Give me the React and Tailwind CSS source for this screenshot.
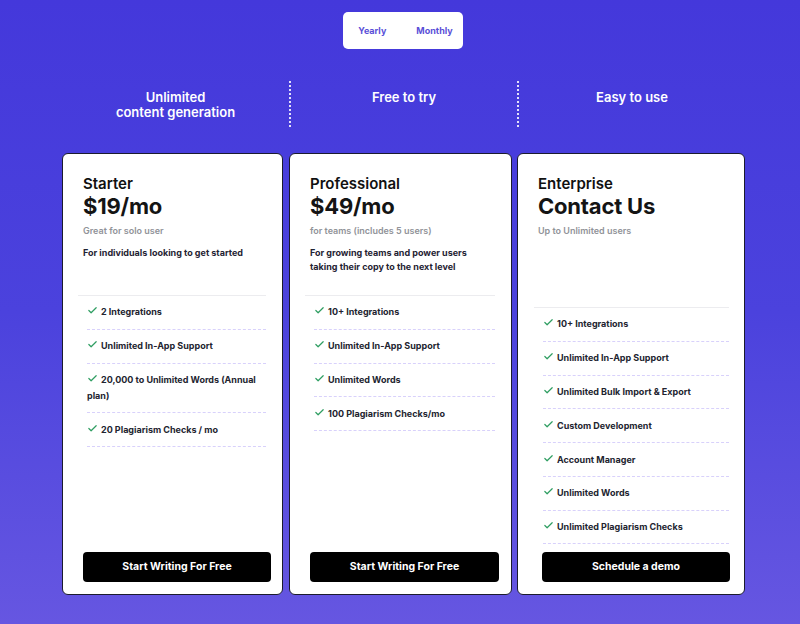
import React from "react";

const plans = [
  {
    name: "Starter",
    price: "$19/mo",
    note: "Great for solo user",
    description: "For individuals looking to get started",
    features: [
      "2 Integrations",
      "Unlimited In-App Support",
      "20,000 to Unlimited Words (Annual plan)",
      "20 Plagiarism Checks / mo",
    ],
    cta: "Start Writing For Free",
    card: "w-[221px]",
    top: "h-[141px] px-[20px]",
    desc: "pr-0",
    rule: "ml-[15px] mr-[16px]",
    list: "ml-[24px] mr-[16px]",
    button: "ml-[20px] mr-[11px]",
  },
  {
    name: "Professional",
    price: "$49/mo",
    note: "for teams (includes 5 users)",
    description: "For growing teams and power users taking their copy to the next level",
    features: [
      "10+ Integrations",
      "Unlimited In-App Support",
      "Unlimited Words",
      "100 Plagiarism Checks/mo",
    ],
    cta: "Start Writing For Free",
    card: "w-[223px]",
    top: "h-[141px] px-[20px]",
    desc: "pr-[20px]",
    rule: "ml-[15px] mr-[16px]",
    list: "ml-[24px] mr-[16px]",
    button: "ml-[20px] mr-[12px]",
  },
  {
    name: "Enterprise",
    price: "Contact Us",
    note: "Up to Unlimited users",
    description: "",
    features: [
      "10+ Integrations",
      "Unlimited In-App Support",
      "Unlimited Bulk Import & Export",
      "Custom Development",
      "Account Manager",
      "Unlimited Words",
      "Unlimited Plagiarism Checks",
    ],
    cta: "Schedule a demo",
    card: "w-[228px]",
    top: "h-[153px] px-[20px]",
    desc: "pr-0",
    rule: "ml-[16px] mr-[15px]",
    list: "ml-[25px] mr-[15px]",
    button: "ml-[24px] mr-[14px]",
  },
];

const CheckMark = () => (
  <svg
    viewBox="0 0 24 24"
    width="11"
    height="11"
    fill="none"
    stroke="#2f9e62"
    strokeWidth="2.6"
    strokeLinecap="round"
    strokeLinejoin="round"
    className="inline-block align-[-1px] mr-[3px]"
  >
    <path d="M20 6 9 17l-5-5" />
  </svg>
);

const PlanCard = ({ plan }) => (
  <div
    className={`${plan.card} h-[442px] bg-white border border-[#1b1b2e] rounded-[6px] flex flex-col`}
  >
    <div className={`${plan.top} pt-[21px]`}>
      <h3 className="text-[15px] leading-[18px] font-semibold text-[#111111]">
        {plan.name}
      </h3>
      <div className="text-[22px] leading-[26px] font-bold text-[#141414] tracking-[-0.2px]">
        {plan.price}
      </div>
      <p className="mt-[6px] text-[9px] leading-[12px] font-semibold text-[#919399]">
        {plan.note}
      </p>
      {plan.description && (
        <p className={`${plan.desc} mt-[9px] text-[9px] leading-[14px] font-bold text-[#1f2333]`}>
          {plan.description}
        </p>
      )}
    </div>
    <div className={`${plan.rule} h-px bg-[#ececef]`} />
    <ul className={plan.list}>
      {plan.features.map((f, i) => (
        <li
          key={i}
          className="py-[8.4px] text-[9px] leading-[16px] font-bold text-[#22242f] border-b border-dashed border-[#d8d1fb]"
        >
          <CheckMark />
          {f}
        </li>
      ))}
    </ul>
    <button
      className={`${plan.button} mt-auto mb-[12px] h-[30px] bg-black text-white rounded-[4px] text-[10.5px] font-bold`}
    >
      {plan.cta}
    </button>
  </div>
);

export default function App() {
  return (
    <div
      className="w-[800px] h-[624px] bg-gradient-to-b from-[#4438db] via-[#4b42dd] to-[#6656e1] pl-[62px] pt-[12px]"
      style={{ fontFamily: "Inter, 'Noto Sans', sans-serif" }}
    >
      <div className="grid grid-cols-[227px_228px_228px]">
        <div />
        <div className="flex justify-center">
          <div className="w-[120px] h-[37px] bg-white rounded-[5px] flex items-center justify-center gap-[30px] pl-[5px] text-[9px] font-bold text-[#5a4fd8]">
            <span>Yearly</span>
            <span>Monthly</span>
          </div>
        </div>
        <div />
      </div>

      <div className="grid grid-cols-[227px_228px_228px] mt-[32px] h-[46px] text-white text-[13px] leading-[14.5px] font-semibold text-center">
        <div className="pt-[9px]">
          Unlimited
          <br />
          content generation
        </div>
        <div className="pt-[9px] border-l-2 border-dotted border-white/85">Free to try</div>
        <div className="pt-[9px] border-l-2 border-dotted border-white/85">Easy to use</div>
      </div>

      <div className="grid grid-cols-[227px_228px_228px] mt-[26px]">
        {plans.map((p) => (
          <PlanCard key={p.name} plan={p} />
        ))}
      </div>
    </div>
  );
}
